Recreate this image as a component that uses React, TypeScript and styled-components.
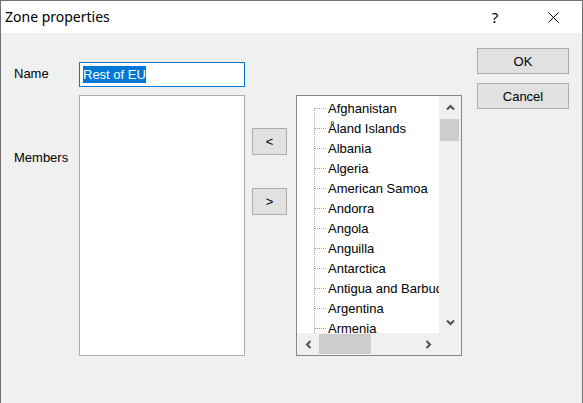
import React from 'react';
import styled, { createGlobalStyle } from 'styled-components';

const countries = [
  'Afghanistan',
  'Åland Islands',
  'Albania',
  'Algeria',
  'American Samoa',
  'Andorra',
  'Angola',
  'Anguilla',
  'Antarctica',
  'Antigua and Barbuda',
  'Argentina',
  'Armenia'
];

const GlobalStyle = createGlobalStyle`
  html, body {
    margin: 0;
    padding: 0;
    background: #f0f0f0;
  }
  body {
    width: 583px;
    height: 403px;
    overflow: hidden;
  }
`;

const Window = styled.div`
  width: 583px;
  height: 403px;
  box-sizing: border-box;
  border: 1px solid #707070;
  border-bottom: none;
  display: flex;
  flex-direction: column;
  background: #f0f0f0;
  font-family: "Liberation Sans", Arial, sans-serif;
  font-size: 13px;
  color: #000;
  overflow: hidden;
`;

const TitleBar = styled.div`
  flex: none;
  height: 32px;
  background: #fff;
  display: flex;
  align-items: center;
  padding-left: 4px;
`;

const Title = styled.span`
  flex: 1;
  font-family: "Noto Sans", "Segoe UI", sans-serif;
  font-size: 14px;
  margin-top: -1px;
`;

const CaptionButton = styled.div`
  width: 58px;
  height: 32px;
  display: flex;
  align-items: center;
  justify-content: center;
  font-family: "Noto Sans", "Segoe UI", sans-serif;
  font-size: 15px;
`;

const Client = styled.div`
  flex: 1;
  display: flex;
  align-items: flex-start;
  padding-left: 13px;
`;

const Form = styled.div`
  display: grid;
  grid-template-columns: 65px 166px 51px 166px;
  grid-template-rows: 25px 261px;
  row-gap: 8px;
  margin-top: 29px;
`;

const Label = styled.label<{ $top?: number }>`
  align-self: ${(p) => (p.$top === undefined ? 'center' : 'start')};
  margin-top: ${(p) => p.$top ?? -2}px;
  line-height: 15px;
`;

const NameInput = styled.div`
  width: 166px;
  box-sizing: border-box;
  border: 1px solid #0078d7;
  background: #fff;
  display: flex;
  align-items: center;
  padding-left: 3px;
`;

const Selection = styled.span`
  background: #0078d7;
  color: #fff;
  line-height: 17px;
`;

const ListBox = styled.div`
  box-sizing: border-box;
  border: 1px solid #abadb3;
  background: #fff;
`;

const ArrowColumn = styled.div`
  display: flex;
  flex-direction: column;
  align-items: flex-start;
  padding: 33px 0 0 7px;
  gap: 33px;
`;

const PushButton = styled.div<{ $w: number; $h: number }>`
  width: ${(p) => p.$w}px;
  height: ${(p) => p.$h}px;
  box-sizing: border-box;
  border: 1px solid #adadad;
  background: #e1e1e1;
  display: flex;
  align-items: center;
  justify-content: center;
`;

const TreeBox = styled.div`
  box-sizing: border-box;
  border: 1px solid #828790;
  background: #fff;
  display: grid;
  grid-template-columns: 142px 22px;
  grid-template-rows: 237px 22px;
  overflow: hidden;
`;

const TreeItems = styled.div`
  padding-top: 2px;
  overflow: hidden;
`;

const TreeRow = styled.div`
  height: 20px;
  display: flex;
  align-items: center;
  white-space: nowrap;
`;

const VScroll = styled.div`
  background: #f0f0f0;
  display: flex;
  flex-direction: column;
`;

const HScroll = styled.div`
  background: #f0f0f0;
  display: flex;
`;

const ScrollArrow = styled.div`
  flex: none;
  width: 22px;
  height: 22px;
  display: flex;
  align-items: center;
  justify-content: center;
`;

const Track = styled.div<{ $vertical?: boolean }>`
  flex: 1;
  display: flex;
  flex-direction: ${(p) => (p.$vertical ? 'column' : 'row')};
  padding: ${(p) => (p.$vertical ? '1px 2px 0 1px' : '1px 0 1px 0')};
`;

const Thumb = styled.div<{ $vertical?: boolean }>`
  background: #cdcdcd;
  ${(p) => (p.$vertical ? 'height: 22px;' : 'width: 52px;')}
  ${(p) => (p.$vertical ? 'width: 100%;' : 'height: 100%;')}
`;

const Corner = styled.div`
  background: #f0f0f0;
`;

const ButtonColumn = styled.div`
  display: flex;
  flex-direction: column;
  gap: 9px;
  margin: 15px 0 0 15px;
`;

function Chevron({ dir }: { dir: 'up' | 'down' | 'left' | 'right' }) {
  const rot = { up: 0, right: 90, down: 180, left: 270 }[dir];
  return (
    <svg width="9" height="9" viewBox="0 0 9 9" style={{ transform: `rotate(${rot}deg)` }}>
      <polyline points="1,6.5 4.5,3 8,6.5" fill="none" stroke="#505050" strokeWidth="2" />
    </svg>
  );
}

function Connector({ first }: { first: boolean }) {
  return (
    <svg width="31" height="20" style={{ flex: 'none' }}>
      <line x1="17.5" y1={first ? 10 : 0} x2="17.5" y2="20" stroke="#a0a0a0" strokeDasharray="1 1" />
      <line x1="18" y1="10.5" x2="29" y2="10.5" stroke="#a0a0a0" strokeDasharray="1 1" />
    </svg>
  );
}

export default function App() {
  return (
    <>
      <GlobalStyle />
      <Window>
        <TitleBar>
          <Title>Zone properties</Title>
          <CaptionButton>?</CaptionButton>
          <CaptionButton>
            <svg width="11" height="11" viewBox="0 0 11 11">
              <path d="M0.5 0.5 L10.5 10.5 M10.5 0.5 L0.5 10.5" stroke="#000" strokeWidth="1" />
            </svg>
          </CaptionButton>
        </TitleBar>
        <Client>
          <Form>
            <Label>Name</Label>
            <NameInput>
              <Selection>Rest of EU</Selection>
            </NameInput>
            <div />
            <div />
            <Label $top={55}>Members</Label>
            <ListBox />
            <ArrowColumn>
              <PushButton $w={35} $h={27}>&lt;</PushButton>
              <PushButton $w={35} $h={27}>&gt;</PushButton>
            </ArrowColumn>
            <TreeBox>
              <TreeItems>
                {countries.map((c, i) => (
                  <TreeRow key={c}>
                    <Connector first={i === 0} />
                    {c}
                  </TreeRow>
                ))}
              </TreeItems>
              <VScroll>
                <ScrollArrow><Chevron dir="up" /></ScrollArrow>
                <Track $vertical><Thumb $vertical /></Track>
                <ScrollArrow><Chevron dir="down" /></ScrollArrow>
              </VScroll>
              <HScroll>
                <ScrollArrow><Chevron dir="left" /></ScrollArrow>
                <Track><Thumb /></Track>
                <ScrollArrow><Chevron dir="right" /></ScrollArrow>
              </HScroll>
              <Corner />
            </TreeBox>
          </Form>
          <ButtonColumn>
            <PushButton $w={92} $h={26}>OK</PushButton>
            <PushButton $w={92} $h={26}>Cancel</PushButton>
          </ButtonColumn>
        </Client>
      </Window>
    </>
  );
}
